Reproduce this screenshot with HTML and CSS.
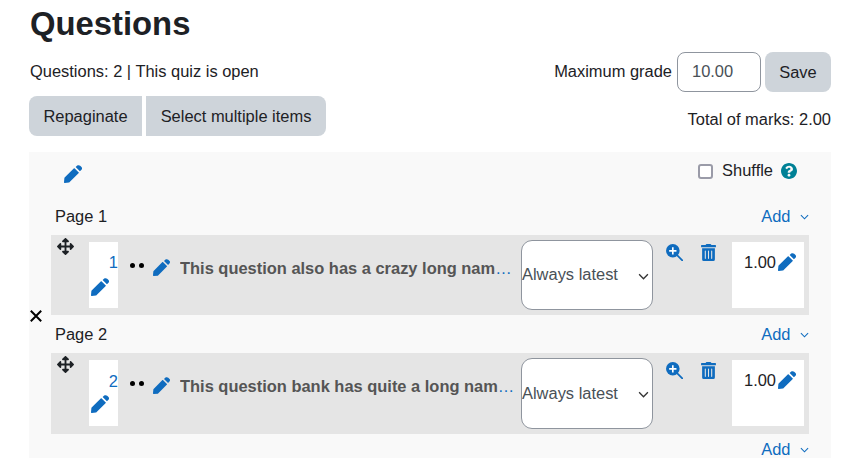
FILE: index.html
```html
<!DOCTYPE html>
<html lang="en">
<head>
	<meta charset="utf-8">
	<title>Questions</title>
	<link rel="stylesheet" href="styles.css">
</head>
<body>
	<svg class="defs" width="0" height="0">
		<symbol id="i-pen" viewBox="0 0 512 512"><path d="M284 92L18 358c-4 4-6 8-7 13L0 490c-2 14 8 24 22 22l119-11c5-1 9-3 13-7l266-266c4-4 4-10 0-14L298 92c-4-4-10-4-14 0zM338 52c-4 4-4 10 0 14l108 108c4 4 10 4 14 0l30-30c30-30 30-62 8-84l-38-38C438-0 406 0 376 14z"/></symbol>
		<symbol id="i-move" viewBox="0 0 512 512"><path d="M352.201 425.775l-79.196 79.196c-9.373 9.373-24.568 9.373-33.941 0l-79.196-79.196c-15.119-15.119-4.411-40.971 16.971-40.97h51.162L228 284H127.196v51.162c0 21.382-25.851 32.09-40.971 16.971L7.029 272.937c-9.373-9.373-9.373-24.569 0-33.941L86.225 159.8c15.119-15.119 40.971-4.411 40.971 16.971V228H228V127.196h-51.23c-21.382 0-32.09-25.851-16.971-40.971l79.196-79.196c9.373-9.373 24.568-9.373 33.941 0l79.196 79.196c15.119 15.119 4.411 40.971-16.971 40.971h-51.162V228h100.804v-51.162c0-21.382 25.851-32.09 40.97-16.971l79.196 79.196c9.373 9.373 9.373 24.569 0 33.941L425.773 352.2c-15.119 15.119-40.971 4.411-40.97-16.971V284H284v100.804h51.23c21.382 0 32.09 25.851 16.971 40.971z"/></symbol>
		<symbol id="i-zoom" viewBox="0 0 512 512">
			<line x1="340" y1="340" x2="490" y2="490" stroke="#0f6cbf" stroke-width="52" stroke-linecap="round"/>
			<circle cx="205" cy="205" r="205" fill="#0f6cbf"/>
			<path d="M180 95h50v85h85v50h-85v85h-50v-85H95v-50h85z" fill="#fff"/>
		</symbol>
		<symbol id="i-trash" viewBox="0 0 448 512"><path d="M32 464a48 48 0 0 0 48 48h288a48 48 0 0 0 48-48V128H32zm272-256a16 16 0 0 1 32 0v224a16 16 0 0 1-32 0zm-96 0a16 16 0 0 1 32 0v224a16 16 0 0 1-32 0zm-96 0a16 16 0 0 1 32 0v224a16 16 0 0 1-32 0zM432 32H312l-9.4-18.7A24 24 0 0 0 281.1 0H166.8a23.72 23.72 0 0 0-21.4 13.3L136 32H16A16 16 0 0 0 0 48v32a16 16 0 0 0 16 16h416a16 16 0 0 0 16-16V48a16 16 0 0 0-16-16z"/></symbol>
		<symbol id="i-help" viewBox="8 8 496 496"><path d="M504 256c0 136.997-111.043 248-248 248S8 392.997 8 256C8 119.083 119.043 8 256 8s248 111.083 248 248zM262.655 90c-54.497 0-89.255 22.957-116.549 63.758-3.536 5.286-2.353 12.415 2.715 16.258l34.699 26.31c5.205 3.947 12.621 3.008 16.665-2.122 17.864-22.658 30.113-35.797 57.303-35.797 20.429 0 45.698 13.148 45.698 32.958 0 14.976-12.363 22.667-32.534 33.976C247.128 238.528 216 254.941 216 296v4c0 6.627 5.373 12 12 12h56c6.627 0 12-5.373 12-12v-1.333c0-28.462 83.186-29.647 83.186-106.667 0-58.002-60.165-102-116.531-102zM256 338c-25.365 0-46 20.635-46 46 0 25.364 20.635 46 46 46s46-20.636 46-46c0-25.365-20.635-46-46-46z"/></symbol>
		<symbol id="i-down" viewBox="0 0 10 6"><path d="M1 1l4 4 4-4" fill="none" stroke="currentColor" stroke-width="1.2"/></symbol>
	</svg>

	<div id="pg">
		<h1>Questions</h1>

		<div class="bar bar-info">
			<div class="info-text">Questions: 2 | This quiz is open</div>
			<form class="grade">
				<label for="maxgrade" class="info-text">Maximum grade</label>
				<input type="text" id="maxgrade" class="grade-input" value="10.00">
				<button type="button" class="btn btn-save">Save</button>
			</form>
		</div>

		<div class="bar bar-tools">
			<div class="btn-group">
				<button type="button" class="btn btn-left">Repaginate</button>
				<button type="button" class="btn btn-right">Select multiple items</button>
			</div>
			<div class="total">Total of marks: 2.00</div>
		</div>

		<div class="panel">
			<div class="panel-top">
				<svg class="ico ico-title"><use href="#i-pen"/></svg>
				<label class="shuffle">
					<input type="checkbox" class="check">
					<span>Shuffle</span>
					<svg class="ico-help"><use href="#i-help"/></svg>
				</label>
			</div>

			<div class="page-head">
				<span>Page 1</span>
				<a class="add">Add <svg class="ico-down"><use href="#i-down"/></svg></a>
			</div>
			<div class="slot">
				<svg class="ico-move"><use href="#i-move"/></svg>
				<div class="num">
					<a>1</a>
					<svg class="ico ico-num"><use href="#i-pen"/></svg>
				</div>
				<span class="dots"><i></i><i></i></span>
				<svg class="ico ico-q"><use href="#i-pen"/></svg>
				<a class="qname"><span>This question also has a crazy long name that goes on and on</span></a>
				<div class="version-wrap">
					<select class="version"><option>Always latest</option></select>
					<svg class="version-arrow"><use href="#i-down"/></svg>
				</div>
				<svg class="ico-zoom"><use href="#i-zoom"/></svg>
				<svg class="ico-trash"><use href="#i-trash"/></svg>
				<div class="mark">1.00<svg class="ico ico-mark"><use href="#i-pen"/></svg></div>
			</div>

			<div class="page-head">
				<span>Page 2</span>
				<a class="add">Add <svg class="ico-down"><use href="#i-down"/></svg></a>
			</div>
			<div class="slot slot-2">
				<svg class="ico-move"><use href="#i-move"/></svg>
				<div class="num">
					<a>2</a>
					<svg class="ico ico-num"><use href="#i-pen"/></svg>
				</div>
				<span class="dots"><i></i><i></i></span>
				<svg class="ico ico-q"><use href="#i-pen"/></svg>
				<a class="qname"><span>This question bank has quite a long name that goes on and on</span></a>
				<div class="version-wrap">
					<select class="version"><option>Always latest</option></select>
					<svg class="version-arrow"><use href="#i-down"/></svg>
				</div>
				<svg class="ico-zoom"><use href="#i-zoom"/></svg>
				<svg class="ico-trash"><use href="#i-trash"/></svg>
				<div class="mark">1.00<svg class="ico ico-mark"><use href="#i-pen"/></svg></div>
			</div>

			<div class="page-foot">
				<a class="add">Add <svg class="ico-down"><use href="#i-down"/></svg></a>
			</div>

			<svg class="remove" viewBox="0 0 12 12"><path d="M.8.800l10.400 10.400M11.200.800L.8 11.200" fill="none" stroke="#000" stroke-width="2"/></svg>
		</div>
	</div>
</body>
</html>
```

FILE: styles.css
```css
html, body {
	margin: 0;
	height: 458px;
	overflow: hidden;
}
body {
	background-color: #fff;
	color: #1d2125;
	font-family: "Liberation Sans", Arial, sans-serif;
	font-size: 16.45px;
	line-height: 24px;
}
.defs {
	position: absolute;
}
#pg {
	padding: 0 36px 0 29px;
}
h1 {
	margin: 0;
	padding: 5px 0 0 1px;
	height: 52px;
	box-sizing: border-box;
	font-size: 32.8px;
	line-height: 38px;
	font-weight: bold;
}
.bar {
	display: flex;
	justify-content: space-between;
}
.bar-info {
	align-items: center;
	padding-left: 1px;
	height: 40px;
}
.info-text {
	padding-bottom: 2px;
}
.bar-tools {
	margin-top: 4px;
	height: 40px;
	margin-bottom: 16px;
}
.total {
	padding-top: 11px;
}
.grade {
	display: flex;
	align-items: center;
	margin: 0;
}
.grade-input {
	box-sizing: border-box;
	width: 84px;
	height: 40px;
	margin: 0 4px 0 5px;
	padding: 0 14px 1px;
	border: 1px solid #8f959e;
	border-radius: 8px;
	background: #fff;
	color: #495057;
	font: 16.45px "Liberation Sans", Arial, sans-serif;
}
.btn {
	height: 40px;
	padding: 0;
	border: 0;
	background-color: #ced4da;
	color: #1d2125;
	font: 16.45px "Liberation Sans", Arial, sans-serif;
}
.btn-save {
	width: 66px;
	border-radius: 8px;
}
.btn-group {
	display: flex;
	gap: 4px;
}
.btn-left {
	width: 113px;
	border-radius: 8px 0 0 8px;
}
.btn-right {
	width: 180px;
	border-radius: 0 8px 8px 0;
}

.panel {
	position: relative;
	height: 306px;
	padding: 0 22px;
	background-color: #f9f9f9;
}
.panel-top {
	display: flex;
	justify-content: space-between;
	height: 45px;
	padding: 13px 12px 0 13px;
	box-sizing: border-box;
}
.ico {
	fill: #0f6cbf;
	flex: none;
}
.ico-title {
	width: 18px;
	height: 18px;
}
.shuffle {
	display: flex;
	align-items: flex-start;
	height: 24px;
	margin-top: -7px;
}
.check {
	appearance: none;
	width: 15px;
	height: 15px;
	margin: 6px 9px 0 0;
	border: 2px solid #9a9ba8;
	border-radius: 3px;
	background: #fff;
	box-sizing: border-box;
}
.ico-help {
	width: 16px;
	height: 16px;
	margin: 5px 0 0 8px;
	fill: #008196;
}
.page-head {
	display: flex;
	justify-content: space-between;
	align-items: center;
	height: 38px;
	padding-left: 4px;
}
.add {
	color: #0f6cbf;
}
.ico-down {
	width: 9px;
	height: 6px;
	margin-left: 5px;
	vertical-align: 2px;
}
.page-foot {
	display: flex;
	justify-content: flex-end;
	padding-top: 3px;
}

.slot {
	display: flex;
	align-items: flex-start;
	height: 80px;
	background-color: #e5e5e5;
}
.slot-2 {
	height: 81px;
}
.ico-move {
	flex: none;
	width: 17px;
	height: 17px;
	margin: 3px 15px 0 6px;
	fill: #1d2125;
}
.num {
	flex: none;
	box-sizing: border-box;
	width: 29px;
	height: 66px;
	margin-top: 7px;
	padding-top: 8px;
	background-color: #fff;
	text-align: right;
	color: #0f6cbf;
}
.slot-2 .num {
	padding-top: 9px;
}
.num a {
	display: block;
	height: 24px;
}
.ico-num {
	display: block;
	width: 18px;
	height: 18px;
	margin: 4px 0 0 2px;
}
.slot-2 .ico-num {
	margin-top: 2px;
}
.dots {
	flex: none;
	display: flex;
	gap: 4px;
	margin: 28px 9px 0 12px;
}
.dots i {
	width: 5px;
	height: 5px;
	border-radius: 50%;
	background-color: #000;
}
.ico-q {
	width: 17px;
	height: 17px;
	margin: 24px 10px 0 0;
}
.qname {
	flex: none;
	width: 332px;
	margin-top: 21px;
	overflow: hidden;
	white-space: nowrap;
	text-overflow: ellipsis;
	color: #0f6cbf;
}
.slot-2 .qname {
	width: 335px;
}
.qname span {
	color: #555;
	font-weight: bold;
}
.version-wrap {
	position: relative;
	flex: none;
	width: 132px;
	height: 70px;
	margin: 5px 0 0 9px;
}
.slot-2 .version-wrap {
	height: 71px;
	margin-left: 6px;
}
.version {
	appearance: none;
	display: block;
	box-sizing: border-box;
	width: 100%;
	height: 100%;
	padding: 0 0 2px;
	border: 1px solid #8f959e;
	border-radius: 11px;
	background-color: #fff;
	color: #495057;
	font: 16.45px "Liberation Sans", Arial, sans-serif;
}
.version-arrow {
	position: absolute;
	right: 4px;
	top: 33px;
	width: 11px;
	height: 7px;
	color: #333;
}
.ico-zoom {
	flex: none;
	width: 17px;
	height: 17px;
	margin: 9px 0 0 13px;
}
.ico-trash {
	flex: none;
	width: 15px;
	height: 17px;
	margin: 9px 0 0 18px;
	fill: #0f6cbf;
}
.mark {
	flex: none;
	display: flex;
	align-items: flex-start;
	justify-content: flex-end;
	box-sizing: border-box;
	width: 72px;
	height: 66px;
	margin: 7px 0 0 16px;
	padding: 8px 8px 0 0;
	background-color: #fff;
}
.ico-mark {
	width: 18px;
	height: 18px;
	margin: 3px 0 0 2px;
}
.remove {
	position: absolute;
	left: 1px;
	top: 158px;
	width: 12px;
	height: 12px;
}
```
